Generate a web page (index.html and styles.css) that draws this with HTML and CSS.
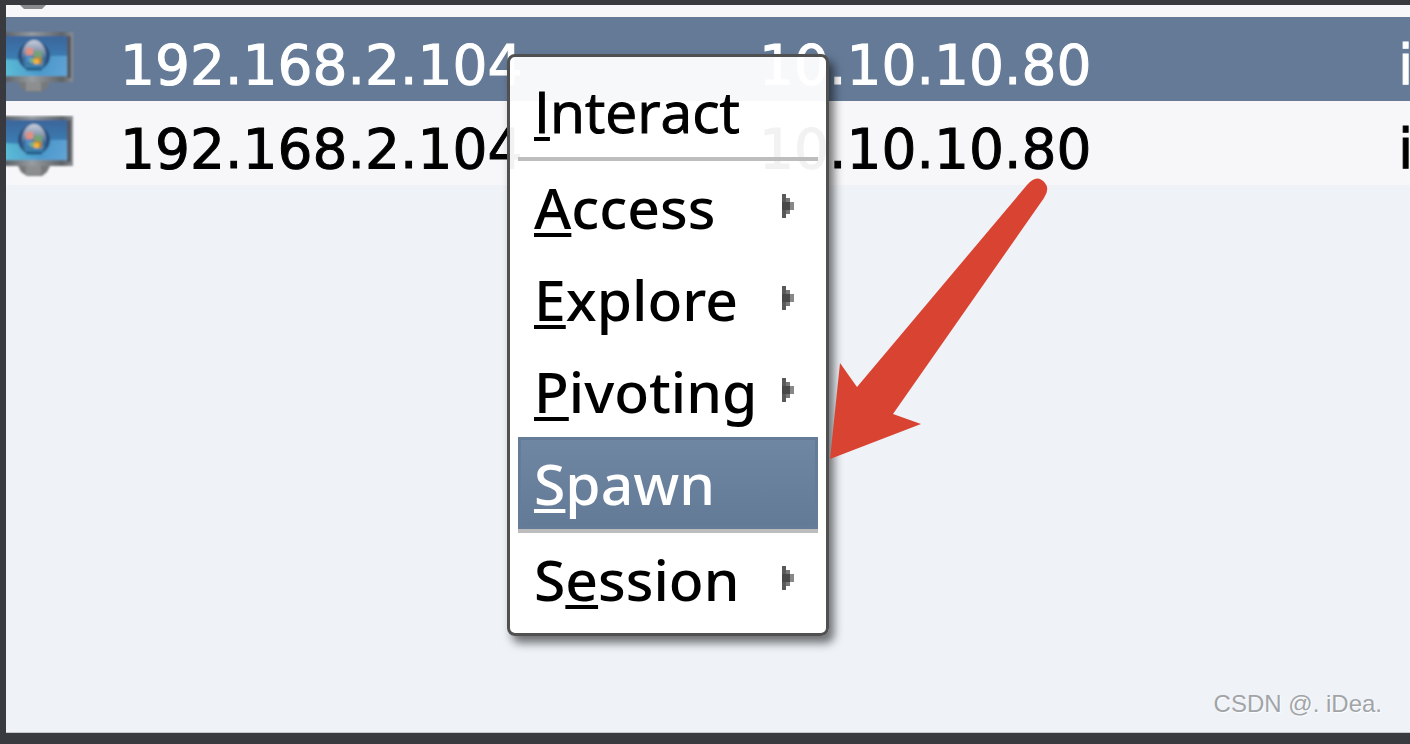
FILE: index.html
```html
<!DOCTYPE html>
<html lang="en">
<head>
<meta charset="utf-8">
<title>Sessions</title>
<link rel="stylesheet" href="styles.css">
</head>
<body>
<svg class="defs" aria-hidden="true">
  <defs>
    <linearGradient id="bezel" x1="0" y1="0" x2="1" y2="0"><stop offset="0" stop-color="#555b61"/><stop offset=".42" stop-color="#989da1"/><stop offset=".85" stop-color="#5e6367"/><stop offset="1" stop-color="#8c9196"/></linearGradient>
    <linearGradient id="screen" x1="0" y1="0" x2="0" y2="1"><stop offset="0" stop-color="#3b659b"/><stop offset=".55" stop-color="#3b7db2"/><stop offset="1" stop-color="#5597cd"/></linearGradient>
    <linearGradient id="sea" x1="0" y1="0" x2="1" y2="0"><stop offset="0" stop-color="#62cbdc"/><stop offset=".6" stop-color="#4a9bce"/><stop offset="1" stop-color="#66a9da"/></linearGradient>
    <linearGradient id="orb" x1="0" y1="0" x2="0" y2="1"><stop offset="0" stop-color="#c8d0de"/><stop offset=".35" stop-color="#8795ae"/><stop offset=".6" stop-color="#356a9a"/><stop offset="1" stop-color="#489bc4"/></linearGradient>
    <filter id="soft" x="-10%" y="-10%" width="120%" height="120%"><feGaussianBlur stdDeviation="1.3"/></filter>
    <symbol id="monitor" viewBox="0 0 70 64">
      <g filter="url(#soft)">
        <path d="M12 51h32l-3 6-5 4H21l-6-4z" fill="#77797b"/>
        <path d="M20 51h15v9H20z" fill="#8d8e8f"/>
        <path d="M-4 1h71v50H-4z" fill="url(#bezel)"/>
        <path d="M61 5h4v42h-4z" fill="#55595d"/>
        <path d="M-4 5h65v40H-4z" fill="url(#screen)"/>
        <path d="M-4 28l18 1 22-1 10-3h15v20H-4z" fill="url(#sea)" opacity=".8"/>
        <ellipse cx="28" cy="25" rx="16" ry="15" fill="#2c4e79"/>
        <ellipse cx="28" cy="25" rx="12" ry="16" fill="url(#orb)"/>
        <path d="M20 17h7v7h-7z" fill="#e09080"/>
        <path d="M28 20h8v6h-8z" fill="#74a375"/>
        <path d="M20 25h6v6h-6z" fill="#4f8fca"/>
        <path d="M24 27h4v5h-4z" fill="#7fae7c"/>
        <path d="M28 26h8v7h-8z" fill="#a8873f"/>
        <path d="M28 28h5v5h-5z" fill="#f5b235"/>
        <path d="M20 38h16" stroke="#245b88" stroke-width="3"/>
      </g>
    </symbol>
    <symbol id="submenu" viewBox="0 0 12 24">
      <path d="M0 0h4v24H0z" fill="#595959"/><path d="M4 4h4v16H4z" fill="#777"/><path d="M8 8h4v8H8z" fill="#888"/><path d="M0 8h8v8H0z" fill="#484848"/>
    </symbol>
  </defs>
</svg>
<main class="panel">
  <table class="sessions">
    <colgroup><col class="col-icon"><col class="col-ip"><col class="col-ip"><col></colgroup>
    <tbody>
      <tr class="row-cut"><td colspan="4"><svg class="stand" viewBox="0 0 58 6" aria-hidden="true"><path d="M14 0h26l-4 4H18z" fill="#888a8c"/></svg></td></tr>
      <tr class="row selected"><td><svg class="monitor" aria-hidden="true"><use href="#monitor"/></svg></td><td>192.168.2.104</td><td>10.10.10.80</td><td>i</td></tr>
      <tr class="row"><td><svg class="monitor" aria-hidden="true"><use href="#monitor"/></svg></td><td>192.168.2.104</td><td>10.10.10.80</td><td>i</td></tr>
    </tbody>
  </table>
  <div class="menu" role="menu">
    <button class="item plain" role="menuitem"><span><u>I</u>nteract</span></button>
    <hr class="separator">
    <button class="item" role="menuitem"><span><u>A</u>ccess</span><svg class="arrow" aria-hidden="true"><use href="#submenu"/></svg></button>
    <button class="item" role="menuitem"><span><u>E</u>xplore</span><svg class="arrow" aria-hidden="true"><use href="#submenu"/></svg></button>
    <button class="item" role="menuitem"><span><u>P</u>ivoting</span><svg class="arrow" aria-hidden="true"><use href="#submenu"/></svg></button>
    <button class="item active" role="menuitem"><span><u>S</u>pawn</span></button>
    <hr class="separator">
    <button class="item" role="menuitem"><span>S<u>e</u>ssion</span><svg class="arrow" aria-hidden="true"><use href="#submenu"/></svg></button>
  </div>
  <svg class="pointer" viewBox="0 0 220 284" aria-hidden="true"><path d="M0 283L10 187L27 211L197 9Q207-3 215 7Q220 13 214 22L63 238L91 248Z" fill="#d94432"/></svg>
  <p class="credit">CSDN @. iDea.</p>
</main>
</body>
</html>
```
FILE: styles.css
```css
* { box-sizing: border-box; }
body {
  margin: 0;
  min-height: 100vh;
  padding: 5px 0 11px 6px;
  display: flex;
  background: #383a3f;
  font-family: "DejaVu Sans", sans-serif;
}
.defs { position: absolute; width: 0; height: 0; }
.panel {
  position: relative;
  flex: 1;
  min-width: 0;
  display: flex;
  flex-direction: column;
  justify-content: space-between;
  overflow: hidden;
  background: #eff3f8;
  border-bottom: 1px solid #c5c9cf;
}
.sessions {
  width: 100%;
  table-layout: fixed;
  border-collapse: collapse;
  background: #f7f7f9;
  color: #000;
  font-size: 55px;
  line-height: 68px;
  -webkit-text-stroke: 1px currentColor;
}
.col-icon { width: 114px; }
.col-ip { width: 639px; }
.sessions td { padding: 0; white-space: nowrap; overflow: hidden; }
.sessions .row td { height: 84px; padding-top: 14px; vertical-align: top; }
.sessions .row-cut td { height: 12px; line-height: 0; vertical-align: top; }
.selected { background: #647a97; color: #fff; }
.monitor { display: block; width: 70px; height: 64px; }
.stand { display: block; width: 58px; height: 6px; }
.menu {
  position: absolute;
  left: 501px;
  top: 49px;
  width: 322px;
  padding: 8px;
  border: 3px solid #505050;
  border-radius: 8px;
  background: rgb(255 255 255 / 95%);
  background-clip: padding-box;
  box-shadow: 5px 7px 10px rgb(0 0 0 / 55%);
}
.item {
  display: flex;
  align-items: center;
  justify-content: space-between;
  width: 100%;
  height: 92px;
  padding: 0 24px 2px 16px;
  border: 0;
  background: none;
  color: #000;
  font: 500 57px/94px "Noto Sans", sans-serif;
  text-align: left;
}
.plain {
  font-family: "Open Sans", sans-serif;
  -webkit-text-stroke: 1px currentColor;
}
.item span { padding-top: 2px; }
.item u {
  text-decoration-thickness: 4px;
  text-underline-offset: 4px;
  text-decoration-skip-ink: none;
}
.active {
  background: linear-gradient(#7087a4, #637a97);
  box-shadow: inset 0 0 0 3px #657c99;
  color: #fff;
}
.separator { height: 4px; margin: 0; border: 0; background: #bdbdbd; }
.arrow { width: 12px; height: 24px; }
.pointer { position: absolute; left: 824px; top: 171px; width: 220px; height: 284px; }
.credit {
  margin: 0;
  padding: 0 28px 14px 0;
  text-align: right;
  font: 24px/28px "Liberation Sans", sans-serif;
  color: #a2a4a7;
  text-shadow: 1px 1px 1px #fff;
}
```
